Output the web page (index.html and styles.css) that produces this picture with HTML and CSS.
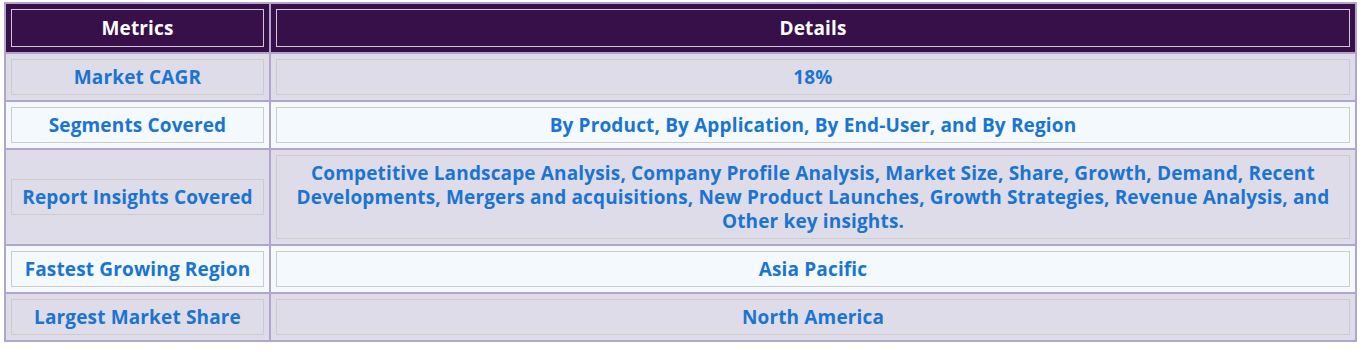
FILE: index.html
```html
<!DOCTYPE html>
<html>
<head>
<meta charset="utf-8">
<link rel="stylesheet" href="styles.css">
</head>
<body>
<table class="metrics">
  <thead>
    <tr>
      <th class="col-metric"><div class="box">Metrics</div></th>
      <th><div class="box">Details</div></th>
    </tr>
  </thead>
  <tbody>
    <tr class="odd">
      <td><div class="box">Market CAGR</div></td>
      <td><div class="box">18%</div></td>
    </tr>
    <tr class="even">
      <td><div class="box">Segments Covered</div></td>
      <td><div class="box">By Product, By Application, By End-User, and By Region</div></td>
    </tr>
    <tr class="odd">
      <td><div class="box">Report Insights Covered</div></td>
      <td><div class="box">Competitive Landscape Analysis, Company Profile Analysis, Market Size, Share, Growth, Demand, Recent Developments, Mergers and acquisitions, New Product Launches, Growth Strategies, Revenue Analysis, and Other key insights.</div></td>
    </tr>
    <tr class="even">
      <td><div class="box">Fastest Growing Region</div></td>
      <td><div class="box">Asia Pacific</div></td>
    </tr>
    <tr class="odd">
      <td><div class="box">Largest Market Share</div></td>
      <td><div class="box">North America</div></td>
    </tr>
  </tbody>
</table>
</body>
</html>
```
FILE: styles.css
```css
html, body {
  margin: 0;
  padding: 0;
  background: #ffffff;
}
body {
  padding: 2px 0 0 4px;
}
.metrics {
  border-collapse: collapse;
  width: 1353px;
  border: 2px solid #b1a5cb;
  font-family: "Open Sans", Lato, sans-serif;
  font-weight: 700;
  font-size: 19px;
  letter-spacing: 0.15px;
}
.metrics th, .metrics td {
  border: 2px solid #b1a5cb;
  padding: 5px;
  text-align: center;
  vertical-align: middle;
}
.metrics .col-metric {
  width: 253px;
}
.metrics th {
  background: #37104a;
  color: #ffffff;
}
.metrics th .box {
  border: 1px solid #cfc7d2;
  line-height: 26px;
}
.box {
  border: 1px solid #cccccc;
  padding: 5px;
  line-height: 24px;
}
.metrics td {
  color: #1b74cf;
}
.odd td {
  background: #dfdcea;
}
.even td {
  background: #f3f9fd;
}
```
